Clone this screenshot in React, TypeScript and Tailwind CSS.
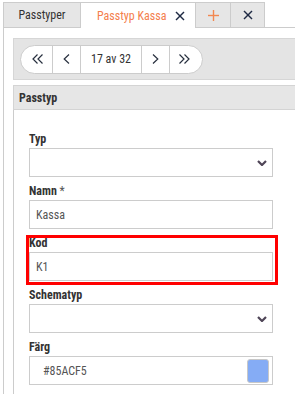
function ChevL({ double }: { double?: boolean }) {
  return double ? (
    <svg width="11" height="10" viewBox="0 0 11 10" fill="none" stroke="#28303f" strokeWidth="1.2">
      <polyline points="5.5,0.5 1,5 5.5,9.5" />
      <polyline points="10.5,0.5 6,5 10.5,9.5" />
    </svg>
  ) : (
    <svg width="7" height="10" viewBox="0 0 7 10" fill="none" stroke="#28303f" strokeWidth="1.2">
      <polyline points="6,0.5 1.2,5 6,9.5" />
    </svg>
  );
}

function ChevR({ double }: { double?: boolean }) {
  return double ? (
    <svg width="11" height="10" viewBox="0 0 11 10" fill="none" stroke="#28303f" strokeWidth="1.2">
      <polyline points="0.5,0.5 5,5 0.5,9.5" />
      <polyline points="5.5,0.5 10,5 5.5,9.5" />
    </svg>
  ) : (
    <svg width="7" height="10" viewBox="0 0 7 10" fill="none" stroke="#28303f" strokeWidth="1.2">
      <polyline points="1,0.5 5.8,5 1,9.5" />
    </svg>
  );
}

function XIcon() {
  return (
    <svg width="10" height="10" viewBox="0 0 10 10" fill="none" stroke="#1f2a44" strokeWidth="1.5">
      <line x1="1" y1="1" x2="9" y2="9" />
      <line x1="9" y1="1" x2="1" y2="9" />
    </svg>
  );
}

function Caret() {
  return (
    <svg width="10" height="6" viewBox="0 0 10 6" fill="none" stroke="#4f4557" strokeWidth="2.2">
      <polyline points="1,1 5,5 9,1" />
    </svg>
  );
}

function Field({ label, req, children }: { label: string; req?: boolean; children: React.ReactNode }) {
  return (
    <div className="mb-[5px] w-[244px]">
      <div className="h-[18px] text-[12px] font-bold leading-[18px] text-[#333]">
        {label}
        {req && <span className="font-normal text-[#555]"> *</span>}
      </div>
      {children}
    </div>
  );
}

function Box({ children, className = "" }: { children?: React.ReactNode; className?: string }) {
  return (
    <div className={`flex h-[29px] items-center border border-[#cccccc] bg-white text-[12px] text-[#555] ${className}`}>
      {children}
    </div>
  );
}

export default function App() {
  return (
    <div className="h-[394px] w-[295px] overflow-hidden bg-white font-['Roboto_Condensed',_'Roboto',_sans-serif]">
      {/* tabs */}
      <div className="flex items-start pl-[3px] pt-[2px] text-[12px]">
        <div className="flex h-[25px] w-[77px] items-center justify-center border-l border-t border-[#cccccc] bg-[#e6e6e6] text-[#333]">
          Passtyper
        </div>
        <div className="relative z-10 -mb-px flex h-[26px] w-[115px] items-start border-l border-t border-[#cccccc] bg-white pl-[16px] pt-[4px]">
          <span className="text-[#f47e4c]">Passtyp Kassa</span>
          <span className="ml-[8px] mt-[4px]">
            <XIcon />
          </span>
        </div>
        <div className="flex h-[25px] w-[35px] items-center justify-center border-l border-t border-[#cccccc] bg-[#e6e6e6]">
          <svg width="11" height="11" viewBox="0 0 11 11" fill="none" stroke="#f2874f" strokeWidth="1.4">
            <line x1="5.5" y1="0" x2="5.5" y2="11" />
            <line x1="0" y1="5.5" x2="11" y2="5.5" />
          </svg>
        </div>
        <div className="flex h-[25px] w-[35px] items-center justify-center border-l border-r border-t border-[#cccccc] bg-[#e6e6e6]">
          <XIcon />
        </div>
      </div>

      {/* panel */}
      <div className="ml-[3px] w-[340px] border-l border-t border-[#cccccc] pl-[9px] pt-[10px]">
        {/* toolbar */}
        <div className="flex h-[42px] items-center border border-[#d6d6d6] bg-[#e4e4e4] pl-[6px]">
          <div className="flex h-[29px] items-stretch rounded-full border border-[#cccccc] bg-white text-[12px] text-[#333]">
            <div className="flex w-[31px] items-center justify-center pl-[2px]">
              <ChevL double />
            </div>
            <div className="flex w-[28px] items-center justify-center border-l border-[#cccccc]">
              <ChevL />
            </div>
            <div className="flex w-[61px] items-center justify-center border-l border-[#cccccc]">17 av 32</div>
            <div className="flex w-[28px] items-center justify-center border-l border-[#cccccc]">
              <ChevR />
            </div>
            <div className="flex w-[33px] items-center justify-center border-l border-[#cccccc] pr-[4px]">
              <ChevR double />
            </div>
          </div>
        </div>

        {/* section */}
        <div className="mt-[5px]">
          <div className="flex h-[25px] items-center border border-[#d4d4d4] bg-[#e6e6e6] pl-[5px] text-[12px] font-bold text-[#333]">
            Passtyp
          </div>
          <div className="h-[300px] border-l border-[#cccccc] pl-[15px] pt-[20px]">
            <Field label="Typ">
              <Box className="justify-end pr-[5px]">
                <Caret />
              </Box>
            </Field>
            <Field label="Namn" req>
              <Box className="pl-[6px]">Kassa</Box>
            </Field>
            <div className="relative w-[244px]">
              <div className="pointer-events-none absolute -bottom-[4px] -left-[3px] -right-[5px] top-[1px] border-[3px] border-[#ff0000]" />
              <Field label="Kod">
                <Box className="pl-[6px]">K1</Box>
              </Field>
            </div>
            <Field label="Schematyp">
              <Box className="justify-end pr-[5px]">
                <Caret />
              </Box>
            </Field>
            <Field label="Färg">
              <Box className="justify-between pl-[13px] pr-[3px]">
                <span>#85ACF5</span>
                <span className="h-[24px] w-[22px] rounded-[3px] border border-[#c8c8c8] bg-[#85acf5]" />
              </Box>
            </Field>
          </div>
        </div>
      </div>
    </div>
  );
}
